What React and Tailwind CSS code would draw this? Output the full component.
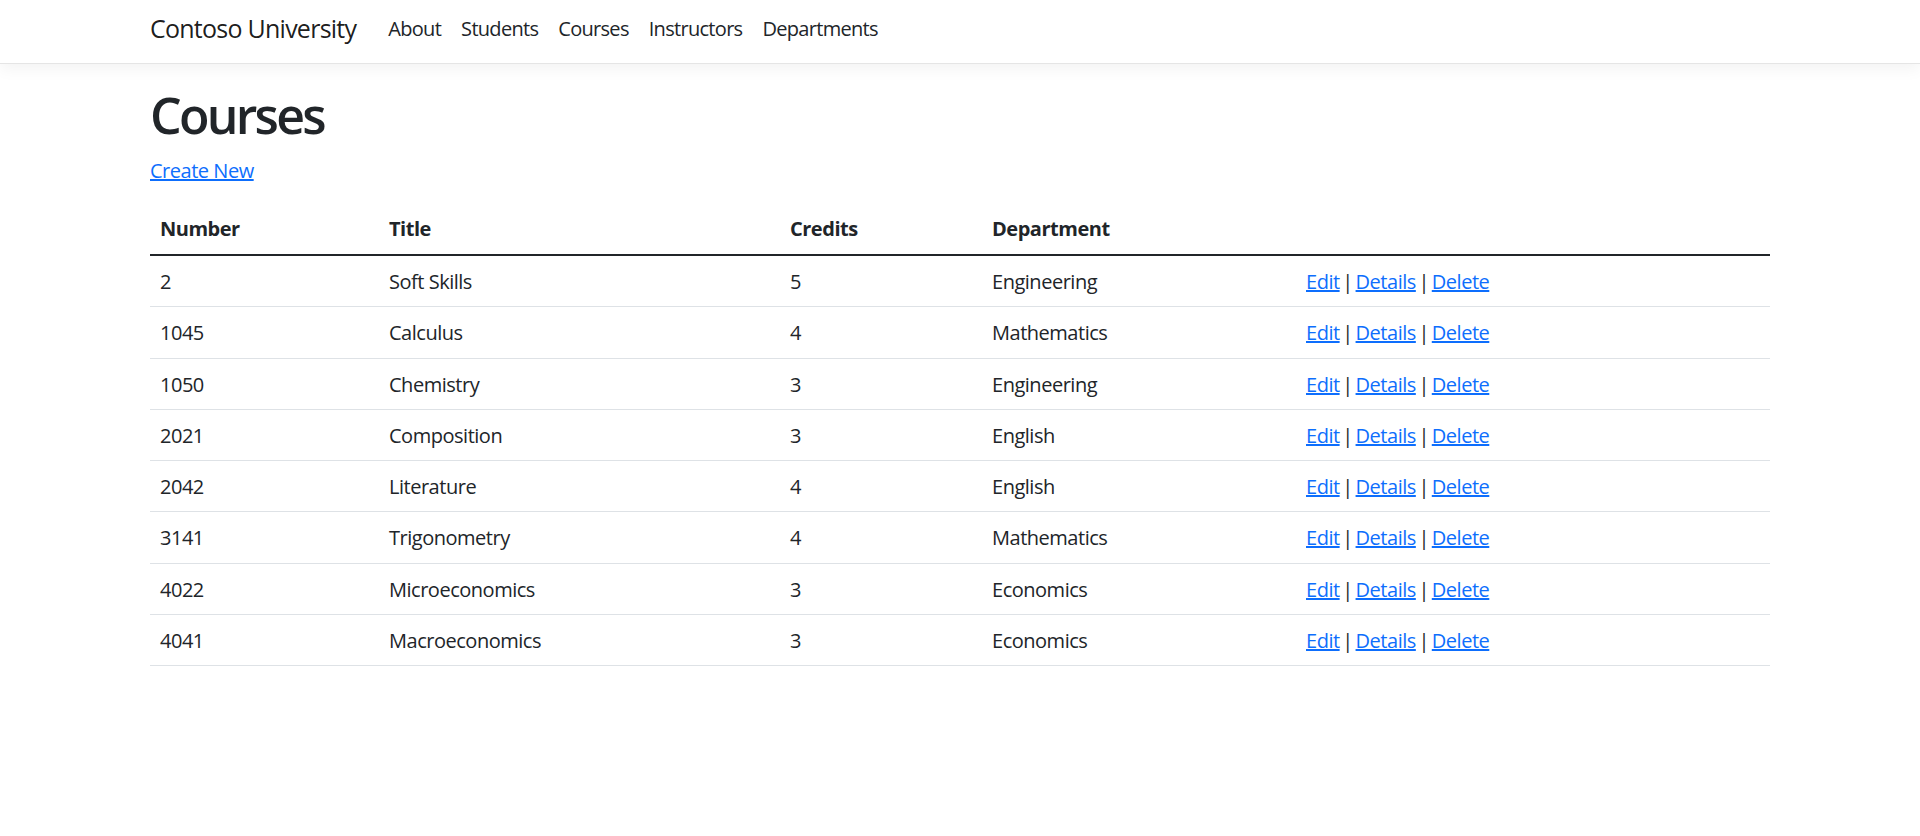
export default function App() {
  const rows = [
    ["2", "Soft Skills", "5", "Engineering"],
    ["1045", "Calculus", "4", "Mathematics"],
    ["1050", "Chemistry", "3", "Engineering"],
    ["2021", "Composition", "3", "English"],
    ["2042", "Literature", "4", "English"],
    ["3141", "Trigonometry", "4", "Mathematics"],
    ["4022", "Microeconomics", "3", "Economics"],
    ["4041", "Macroeconomics", "3", "Economics"],
  ];
  const font = { fontFamily: '"Open Sans", "Noto Sans", sans-serif' };
  return (
    <div className="min-h-[836px] bg-white tracking-[-0.03em] text-[#212529]" style={font}>
      <nav className="h-[64px] border-b border-[#e5e5e5] bg-white shadow-[0_5px_15px_rgba(0,0,0,0.05)]">
        <div className="mx-auto flex h-full w-[1620px] items-center pb-[5px]">
          <a className="mr-[22px] text-[25px] leading-[37.5px] tracking-[-0.03em] text-black/90">Contoso University</a>
          <ul className="flex items-center">
            {["About", "Students", "Courses", "Instructors", "Departments"].map((l) => (
              <li key={l}>
                <a className="block px-[10px] text-[20px] leading-[30px] tracking-[-0.035em] text-[#212529]">{l}</a>
              </li>
            ))}
          </ul>
        </div>
      </nav>
      <main className="mx-auto w-[1620px] pt-[21px]">
        <h1 className="mb-[11px] text-[50px] font-semibold leading-[60px] tracking-[-0.055em]">Courses</h1>
        <p className="mb-[18px] text-[20px] leading-[30px]">
          <a className="text-[#0d6efd] underline">Create New</a>
        </p>
        <table className="w-full table-fixed border-collapse text-left text-[20px]">
          <thead>
            <tr>
              <th className="w-[229px] px-[10px] py-[10px] font-bold leading-[30px]">Number</th>
              <th className="w-[401px] px-[10px] py-[10px] font-bold leading-[30px]">Title</th>
              <th className="w-[202px] px-[10px] py-[10px] font-bold leading-[30px]">Credits</th>
              <th className="w-[314px] px-[10px] py-[10px] font-bold leading-[30px]">Department</th>
              <th className="px-[10px] py-[10px] leading-[30px]"></th>
            </tr>
          </thead>
          <tbody className="border-t-2 border-[#212529]">
            {rows.map((r) => (
              <tr key={r[0]} className="border-b border-[#dee2e6]">
                {r.map((c, i) => (
                  <td key={i} className="px-[10px] pt-[11px] pb-[9px] leading-[30.25px]">{c}</td>
                ))}
                <td className="px-[10px] pt-[11px] pb-[9px] leading-[30.25px] [word-spacing:-2px]">
                  <a className="text-[#0d6efd] underline">Edit</a> |{" "}
                  <a className="text-[#0d6efd] underline">Details</a> |{" "}
                  <a className="text-[#0d6efd] underline">Delete</a>
                </td>
              </tr>
            ))}
          </tbody>
        </table>
      </main>
    </div>
  );
}
